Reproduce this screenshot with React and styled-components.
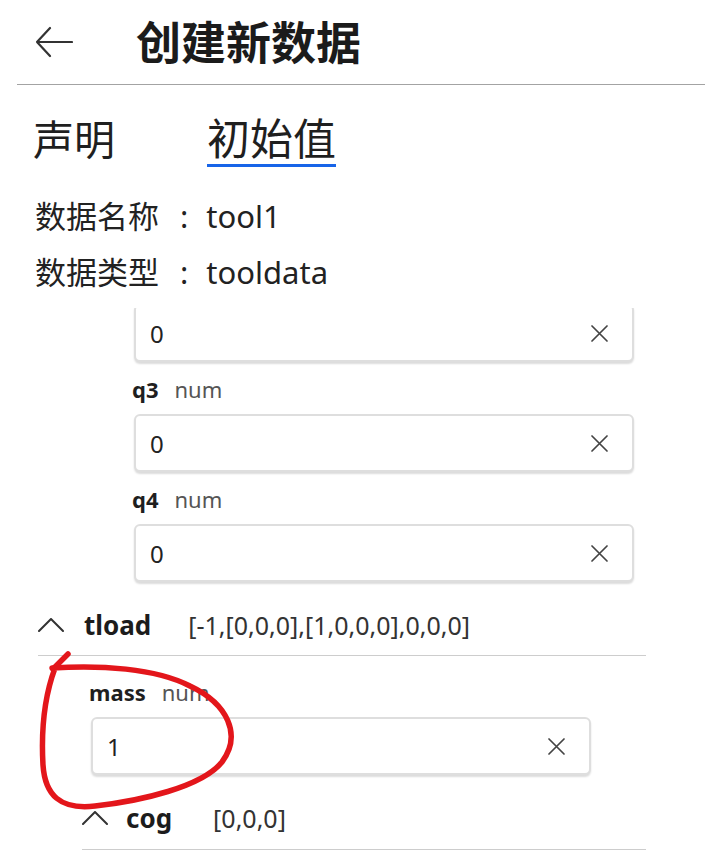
import styled, { createGlobalStyle } from "styled-components"

const GlobalStyle = createGlobalStyle`
    html, body {
        margin: 0;
        padding: 0;
        background: #ffffff;
    }

    body {
        font-family: "Noto Sans", "Noto Sans CJK SC", sans-serif;
        color: #1f1f1f;
    }
`

const Page = styled.div`
    position: relative;
    width: 705px;
    height: 851px;
    overflow: hidden;
    background: #fff;
`

const Header = styled.header`
    display: flex;
    align-items: center;
    height: 84px;
    margin-left: 17px;
    padding-left: 18px;
    border-bottom: 1px solid #a3a3a3;

    & h1 {
        margin: 0 0 0 63px;
        font-size: 45px;
        font-weight: 700;
        color: #1b1b1b;
        line-height: 1;
    }
`

const Tabs = styled.nav`
    display: flex;
    gap: 92px;
    margin-top: 30px;
    padding-left: 33px;
`

const Tab = styled.div`
    font-size: ${(p) => (p.$active ? 43 : 41)}px;
    line-height: 48px;
    padding-bottom: 1px;
    color: #1f1f1f;
    border-bottom: 3px solid ${(p) => (p.$active ? "#1764e8" : "transparent")};
`

const Info = styled.div`
    margin-top: 21px;
    padding-left: 35px;

    & p {
        margin: 0;
        font-size: 31px;
        line-height: 56px;
        color: #222;
    }
`

const Colon = styled.span`
    margin: 0 18px 0 21px;
`

const Scroller = styled.div`
    margin-top: 8px;
    height: 543px;
    overflow: hidden;
`

const ScrollContent = styled.div`
    margin-top: -4px;
`

const FieldWrap = styled.div`
    padding-left: ${(p) => p.$indent}px;
    margin-bottom: 12px;
`

const FieldLabel = styled.div`
    display: flex;
    align-items: center;
    height: 30px;
    margin-bottom: 10px;

    & b {
        font-size: 22px;
        font-weight: 700;
        color: #1f1f1f;
    }

    & span {
        margin-left: 16px;
        font-size: 22px;
        color: #555;
    }
`

const InputBox = styled.div`
    box-sizing: border-box;
    display: flex;
    align-items: center;
    justify-content: space-between;
    width: 500px;
    height: 58px;
    margin-left: 2px;
    padding: 0 24px 0 14px;
    border: 2px solid #dedede;
    border-radius: 6px;
    box-shadow: 0 2px 2px rgba(0, 0, 0, 0.14);
    background: #fff;
    font-size: 24px;
    color: #222;
`

const SectionRow = styled.div`
    display: flex;
    align-items: center;
    height: ${(p) => p.$height}px;
    margin-left: ${(p) => p.$indent}px;
    width: ${(p) => 646 - p.$indent}px;
    margin-top: 12px;
    border-bottom: 1px solid #cdcdcd;

    & b {
        margin-left: ${(p) => p.$gap}px;
        font-size: 26px;
        font-weight: 700;
        color: #1c1c1c;
    }

    & span {
        margin-left: ${(p) => p.$valueGap}px;
        font-size: 25px;
        color: #333;
    }
`

const SectionBody = styled.div`
    padding-top: 21px;
`

const Annotation = styled.svg`
    position: absolute;
    left: 0;
    top: 0;
    pointer-events: none;
`

function BackArrow() {
    return (
        <svg width="38" height="32" viewBox="0 0 38 32">
            <path d="M37 16 H2 M15 2 L2 16 L15 30" fill="none" stroke="#333" strokeWidth="2.2" strokeLinecap="round" strokeLinejoin="round" />
        </svg>
    )
}

function ClearIcon() {
    return (
        <svg width="17" height="17" viewBox="0 0 17 17">
            <path d="M1 1 L16 16 M16 1 L1 16" stroke="#444" strokeWidth="1.7" strokeLinecap="round" />
        </svg>
    )
}

function Chevron() {
    return (
        <svg width="26" height="14" viewBox="0 0 26 14">
            <path d="M1 13 L13 1 L25 13" fill="none" stroke="#333" strokeWidth="2" strokeLinecap="round" strokeLinejoin="round" />
        </svg>
    )
}

function Field({ name, type, value, indent, hideLabel }) {
    return (
        <FieldWrap $indent={indent}>
            {!hideLabel && (
                <FieldLabel>
                    <b>{name}</b>
                    <span>{type}</span>
                </FieldLabel>
            )}
            <InputBox>
                <span>{value}</span>
                <ClearIcon />
            </InputBox>
        </FieldWrap>
    )
}

export default function App() {
    return (
        <>
            <GlobalStyle />
            <Page>
                <Header>
                    <BackArrow />
                    <h1>创建新数据</h1>
                </Header>

                <Tabs>
                    <Tab>声明</Tab>
                    <Tab $active>初始值</Tab>
                </Tabs>

                <Info>
                    <p>数据名称<Colon>:</Colon>tool1</p>
                    <p>数据类型<Colon>:</Colon>tooldata</p>
                </Info>

                <Scroller>
                    <ScrollContent>
                        <Field name="q2" type="num" value="0" indent={132} hideLabel />
                        <Field name="q3" type="num" value="0" indent={132} />
                        <Field name="q4" type="num" value="0" indent={132} />

                        <SectionRow $indent={38} $height={61} $gap={20} $valueGap={37}>
                            <Chevron />
                            <b>tload</b>
                            <span>[-1,[0,0,0],[1,0,0,0],0,0,0]</span>
                        </SectionRow>
                        <SectionBody>
                            <Field name="mass" type="num" value="1" indent={89} />
                            <SectionRow $indent={82} $height={62} $gap={18} $valueGap={41}>
                                <Chevron />
                                <b>cog</b>
                                <span>[0,0,0]</span>
                            </SectionRow>
                        </SectionBody>
                    </ScrollContent>
                </Scroller>

                <Annotation width="705" height="851" viewBox="0 0 705 851">
                    <path d="M68 654 L53 669" fill="none" stroke="#e3161b" strokeWidth="5.5" strokeLinecap="round" />
                    <path
                        d="M52 668 C100 665, 155 668, 190 686 C228 704, 242 735, 222 762 C202 787, 140 801, 95 806 C60 810, 45 795, 43 765 C41 730, 45 695, 55 668"
                        fill="none"
                        stroke="#e3161b"
                        strokeWidth="5.5"
                        strokeLinecap="round"
                    />
                </Annotation>
            </Page>
        </>
    )
}
